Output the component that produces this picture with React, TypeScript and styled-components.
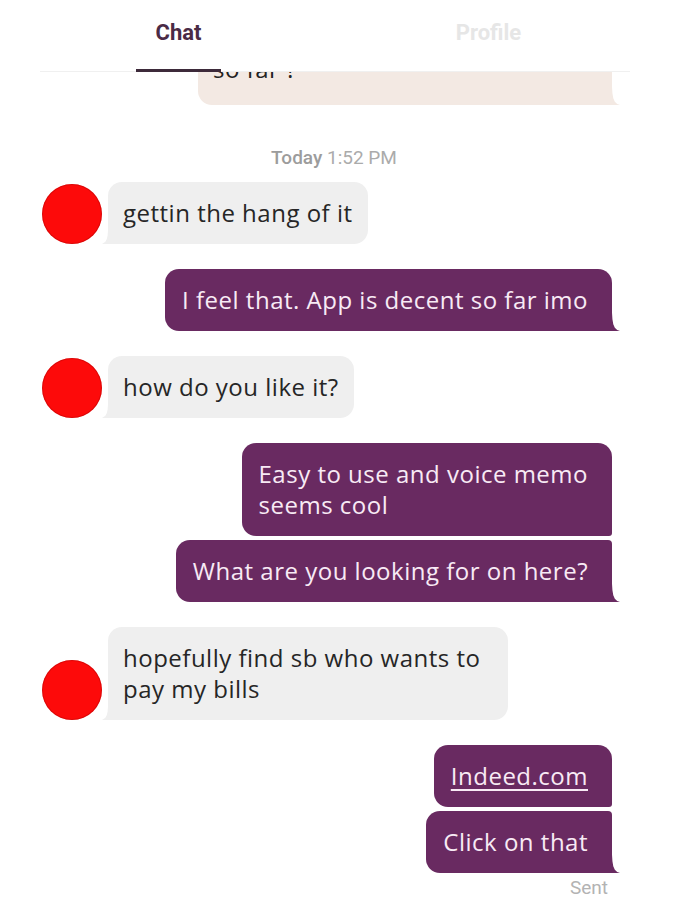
import React from "react";
import styled, { createGlobalStyle, css } from "styled-components";

const GlobalStyle = createGlobalStyle`
  html, body { margin: 0; padding: 0; background: #ffffff; }
  body { font-family: "Open Sans", "Noto Sans", sans-serif; -webkit-font-smoothing: antialiased; }
  * { box-sizing: border-box; }
`;

const PURPLE = "#692a61";

const Screen = styled.div`
  width: 700px;
  height: 913px;
  overflow: hidden;
  display: flex;
  flex-direction: column;
  background: #ffffff;
`;

const TabBar = styled.nav`
  flex: none;
  height: 72px;
  margin: 0 70px 0 40px;
  display: flex;
  align-items: stretch;
  border-bottom: 1px solid #f0f0f0;
  background: #ffffff;
  position: relative;
  z-index: 1;
`;

const Tab = styled.div<{ $active?: boolean; $offset: number }>`
  width: 85px;
  margin-left: ${(p) => p.$offset}px;
  margin-bottom: -1px;
  display: flex;
  justify-content: center;
  padding-top: 20px;
  font-family: Roboto, "Liberation Sans", sans-serif;
  font-weight: 700;
  font-size: 22px;
  line-height: 26px;
  white-space: nowrap;
  color: ${(p) => (p.$active ? "#4a2b45" : "#e6e6e6")};
  border-bottom: 3px solid ${(p) => (p.$active ? "#3d2a3a" : "transparent")};
`;

const Thread = styled.main`
  flex: 1;
  overflow: hidden;
`;

const List = styled.div`
  display: flex;
  flex-direction: column;
  gap: 25px;
  margin-top: -34px;
`;

const Stamp = styled.div`
  align-self: center;
  margin: 16px 0 -13px 0;
  padding-right: 32px;
  font-family: Roboto, "Liberation Sans", sans-serif;
  font-size: 19px;
  line-height: 24px;
  color: #ababab;
  b { font-weight: 500; color: #9c9c9c; }
`;

const ReceivedRow = styled.div`
  display: flex;
  align-items: flex-end;
  gap: 6px;
  padding-left: 42px;
`;

const Avatar = styled.div`
  flex: none;
  width: 60px;
  height: 60px;
  border-radius: 50%;
  background: #fd0a0a;
  box-shadow: inset 0 0 0 1px rgba(160, 0, 0, 0.35);
`;

const SentGroup = styled.div`
  display: flex;
  flex-direction: column;
  align-items: flex-end;
  gap: 4px;
  padding-right: 88px;
`;

type Tone = "sent" | "received" | "quote";
type Pos = "single" | "first" | "last";

const sentRadius: Record<Pos, string> = {
  single: "14px 14px 0 14px",
  first: "14px 14px 3px 14px",
  last: "14px 4px 0 14px",
};

const Bubble = styled.div<{ $tone: Tone; $pos?: Pos; $width?: number }>`
  position: relative;
  font-size: 24px;
  letter-spacing: 0.5px;
  line-height: 31px;
  padding-top: 15px;
  padding-bottom: ${(p) => (p.$tone === "quote" ? 21 : 16)}px;
  ${(p) => (p.$width ? `width: ${p.$width}px;` : "")}

  ${(p) =>
    p.$tone === "received" &&
    css`
      max-width: 400px;
      padding-left: 15px;
      padding-right: 15px;
      background: #efefef;
      color: #262626;
      border-radius: 14px 14px 14px 0;
      &::after {
        content: "";
        position: absolute;
        left: -6px;
        bottom: 0;
        width: 12px;
        height: 14px;
        background: inherit;
        clip-path: polygon(100% 0, 50% 0, 47% 40%, 40% 65%, 28% 84%, 0 100%, 100% 100%);
      }
    `}

  ${(p) =>
    p.$tone !== "received" &&
    css`
      max-width: 470px;
      padding-left: ${p.$tone === "quote" ? 15 : 17}px;
      padding-right: 24px;
      border-radius: ${sentRadius[p.$pos ?? "single"]};
      background: ${p.$tone === "quote" ? "#f3e9e3" : PURPLE};
      color: ${p.$tone === "quote" ? "#222222" : "#f8eaf5"};
    `}

  ${(p) =>
    p.$tone !== "received" &&
    (p.$pos ?? "single") !== "first" &&
    css`
      &::after {
        content: "";
        position: absolute;
        right: -8px;
        bottom: 0;
        width: 14px;
        height: 18px;
        background: inherit;
        clip-path: polygon(0 0, 43% 0, 46% 35%, 52% 62%, 63% 82%, 80% 94%, 100% 100%, 0 100%);
      }
    `}
`;

const LinkText = styled.a`
  color: inherit;
  text-decoration: underline;
  text-decoration-thickness: 1.5px;
  text-underline-offset: 4px;
`;

const Status = styled.div`
  margin-right: 4px;
  font-family: Roboto, "Liberation Sans", sans-serif;
  font-size: 19px;
  line-height: 22px;
  color: #b3b3b3;
`;

export default function App() {
  return (
    <>
      <GlobalStyle />
      <Screen>
        <TabBar>
          <Tab $active $offset={96}>Chat</Tab>
          <Tab $offset={225}>Profile</Tab>
        </TabBar>
        <Thread>
          <List>
            <SentGroup>
              <Bubble $tone="quote" $width={414}>so far ?</Bubble>
            </SentGroup>

            <Stamp>
              <b>Today</b> 1:52 PM
            </Stamp>

            <ReceivedRow>
              <Avatar />
              <Bubble $tone="received">gettin the hang of it</Bubble>
            </ReceivedRow>

            <SentGroup>
              <Bubble $tone="sent">I feel that. App is decent so far imo</Bubble>
            </SentGroup>

            <ReceivedRow>
              <Avatar />
              <Bubble $tone="received">how do you like it?</Bubble>
            </ReceivedRow>

            <SentGroup>
              <Bubble $tone="sent" $pos="first">
                Easy to use and voice memo
                <br />
                seems cool
              </Bubble>
              <Bubble $tone="sent" $pos="last">
                What are you looking for on here?
              </Bubble>
            </SentGroup>

            <ReceivedRow>
              <Avatar />
              <Bubble $tone="received">hopefully find sb who wants to pay my bills</Bubble>
            </ReceivedRow>

            <SentGroup>
              <Bubble $tone="sent" $pos="first">
                <LinkText href="#">Indeed.com</LinkText>
              </Bubble>
              <Bubble $tone="sent" $pos="last">
                Click on that
              </Bubble>
              <Status>Sent</Status>
            </SentGroup>
          </List>
        </Thread>
      </Screen>
    </>
  );
}
